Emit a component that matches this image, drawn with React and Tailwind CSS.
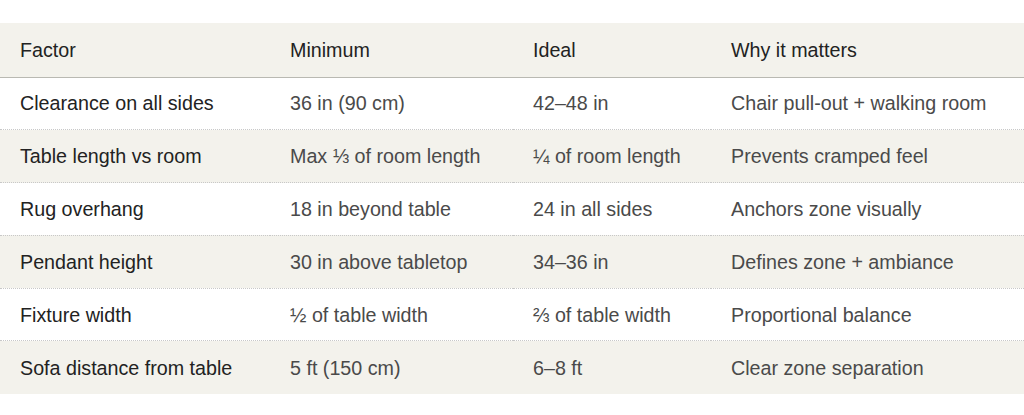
const rows = [
  ["Clearance on all sides", "36 in (90 cm)", "42–48 in", "Chair pull-out + walking room"],
  ["Table length vs room", "Max ⅓ of room length", "¼ of room length", "Prevents cramped feel"],
  ["Rug overhang", "18 in beyond table", "24 in all sides", "Anchors zone visually"],
  ["Pendant height", "30 in above tabletop", "34–36 in", "Defines zone + ambiance"],
  ["Fixture width", "½ of table width", "⅔ of table width", "Proportional balance"],
  ["Sofa distance from table", "5 ft (150 cm)", "6–8 ft", "Clear zone separation"],
];

const headers = ["Factor", "Minimum", "Ideal", "Why it matters"];

export default function App() {
  return (
    <div className="w-[1024px] h-[415px] bg-white pt-[23px] font-['Liberation_Sans',Arial,sans-serif] text-[19.7px] leading-[26px]">
      <table className="w-full border-collapse">
        <colgroup>
          <col className="w-[270px]" />
          <col className="w-[243px]" />
          <col className="w-[198px]" />
          <col />
        </colgroup>
        <thead>
          <tr className="bg-[#f3f2ec] border-b-[1.5px] border-[#b9b9b2]">
            {headers.map((h) => (
              <th key={h} className="h-[54px] px-5 text-left font-normal text-[#222]">
                {h}
              </th>
            ))}
          </tr>
        </thead>
        <tbody>
          {rows.map((r, i) => (
            <tr
              key={r[0]}
              className={`${i % 2 === 1 ? "bg-[#f3f2ec]" : "bg-white"} ${
                i < rows.length - 1 ? "border-b border-dotted border-[#c8c8c8]" : ""
              }`}
            >
              {r.map((c, j) => (
                <td
                  key={j}
                  className={`h-[52.8px] px-5 ${j === 0 ? "text-[#222]" : "text-[#4a4a4a]"}`}
                >
                  {c}
                </td>
              ))}
            </tr>
          ))}
        </tbody>
      </table>
    </div>
  );
}
